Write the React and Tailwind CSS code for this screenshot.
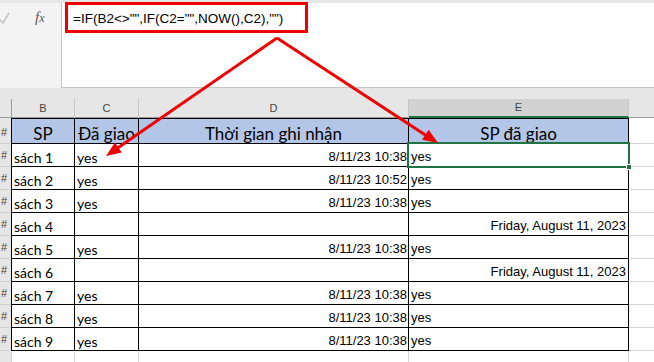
import React from "react";

// Sheet data: B, C, D, E
const rows = [
  ["sách 1", "yes", "8/11/23 10:38", "yes"],
  ["sách 2", "yes", "8/11/23 10:52", "yes"],
  ["sách 3", "yes", "8/11/23 10:38", "yes"],
  ["sách 4", "", "", "Friday, August 11, 2023"],
  ["sách 5", "yes", "8/11/23 10:38", "yes"],
  ["sách 6", "", "", "Friday, August 11, 2023"],
  ["sách 7", "yes", "8/11/23 10:38", "yes"],
  ["sách 8", "yes", "8/11/23 10:38", "yes"],
  ["sách 9", "yes", "8/11/23 10:38", "yes"],
];

const calibri = "font-['Lato','Noto_Sans',sans-serif]";
const arial = "font-['Liberation_Sans',Arial,sans-serif]";

const arrowHead = (x1, y1, x2, y2, len = 15, half = 6) => {
  const dx = x2 - x1;
  const dy = y2 - y1;
  const d = Math.hypot(dx, dy);
  const ux = dx / d;
  const uy = dy / d;
  const bx = x2 - ux * len;
  const by = y2 - uy * len;
  return `${x2},${y2} ${bx - uy * half},${by + ux * half} ${bx + uy * half},${by - ux * half}`;
};

function Arrows() {
  const apex = [277, 38];
  const left = [106, 156];
  const right = [438, 143];
  return (
    <svg className="absolute left-0 top-0 pointer-events-none" width="654" height="362">
      <line x1={apex[0]} y1={apex[1]} x2={left[0] + 8} y2={left[1] - 5.5} stroke="#ee0000" strokeWidth="3" />
      <polygon points={arrowHead(apex[0], apex[1], left[0], left[1])} fill="#ee0000" />
      <line x1={apex[0]} y1={apex[1]} x2={right[0] - 8} y2={right[1] - 5} stroke="#ee0000" strokeWidth="3" />
      <polygon points={arrowHead(apex[0], apex[1], right[0], right[1])} fill="#ee0000" />
    </svg>
  );
}

function FormulaBar() {
  return (
    <div className="flex h-[88px] bg-[#e6e6e6] pt-[3px]">
      <div className="w-[62px] h-full bg-[#f3f3f3] flex items-start pt-[6px] border-r border-[#c6c6c6]">
        <svg width="12" height="14" viewBox="0 0 12 14" className="mt-[2px] -ml-[2px]">
          <polyline points="1,8 5,12 11,2" fill="none" stroke="#c4c4c4" strokeWidth="1.6" />
        </svg>
        <span className="ml-[25px] font-['Liberation_Serif',serif] italic text-[15px] leading-[16px] text-[#5a5a5a]">
          f<span className="text-[12px]">x</span>
        </span>
      </div>
      <div className="flex-1 h-full bg-white border-b border-[#c6c6c6] pl-[3px]">
        <div className={`w-[243px] h-[31px] -mt-[1px] border-[3px] border-[#ee0000] pl-[5px] pt-[6px] ${arial} text-[13.5px] leading-[16px] text-black whitespace-nowrap`}>
          =IF(B2&lt;&gt;"",IF(C2="",NOW(),C2),"")
        </div>
      </div>
    </div>
  );
}

function ColumnHeaders() {
  const hdr = `${arial} text-[11px] leading-[11px] text-[#444] flex items-end justify-center pb-[3px] border-r border-[#c6c6c6]`;
  return (
    <div className="flex h-[19px]">
      <div className="w-[12px] h-full bg-[#e6e6e6] border-r border-b border-[#9b9b9b]" />
      <div className={`w-[63px] h-full bg-[#e6e6e6] border-b border-b-[#9b9b9b] ${hdr}`}>B</div>
      <div className={`w-[64px] h-full bg-[#e6e6e6] border-b border-b-[#9b9b9b] ${hdr}`}>C</div>
      <div className={`w-[270px] h-full bg-[#e6e6e6] border-b border-b-[#9b9b9b] ${hdr}`}>D</div>
      <div className={`w-[220px] h-full bg-[#d2d2d2] border-b-2 border-b-[#217346] ${hdr}`}>E</div>
      <div className="flex-1 h-full bg-[#e6e6e6] border-b border-[#9b9b9b]" />
    </div>
  );
}

function RowHead({ label = "#", h }) {
  return (
    <div className={`w-[11px] ${h} bg-[#e6e6e6] border-b border-[#d0d0d0] ${arial} text-[11px] leading-[11px] text-[#444] flex items-end pb-[5px] pl-[1px] overflow-hidden`}>
      {label}
    </div>
  );
}

export default function App() {
  return (
    <div className="relative w-[654px] h-[362px] overflow-hidden bg-white">
      <FormulaBar />
      <div className="h-[11px] bg-[#e6e6e6]" />
      <ColumnHeaders />

      {/* table header */}
      <div className="flex h-[26px]">
        <RowHead h="h-[26px]" />
        <div className={`w-[64px] bg-[#b4c6e7] border border-black flex items-end justify-center pb-[1px] ${calibri} text-[17px] leading-[17px]`}>SP</div>
        <div className={`w-[64px] bg-[#b4c6e7] border-y border-r border-black flex items-end justify-center pb-[1px] ${calibri} text-[17px] leading-[17px] whitespace-nowrap`}>Đã giao</div>
        <div className={`w-[270px] bg-[#b4c6e7] border-y border-r border-black flex items-end justify-center pb-[1px] ${calibri} text-[17px] leading-[17px]`}>Thời gian ghi nhận</div>
        <div className={`w-[220px] bg-[#b4c6e7] border-y border-r border-black flex items-end justify-center pb-[1px] ${calibri} text-[17px] leading-[17px]`}>SP đã giao</div>
        <div className="flex-1 border-b border-[#d4d4d4]" />
      </div>

      {rows.map(([b, c, d, e], i) => (
        <div key={i} className="flex h-[23px]">
          <RowHead h="h-[23px]" />
          <div className={`w-[64px] border-x border-b border-black flex items-end pb-[1px] pl-[2px] ${calibri} text-[14px] leading-[15px]`}>{b}</div>
          <div className={`w-[64px] border-r border-b border-black flex items-end pb-[1px] pl-[2px] ${calibri} text-[14px] leading-[15px]`}>{c}</div>
          <div className={`w-[270px] border-r border-b border-black flex items-end justify-end pb-[3px] pr-[1px] ${arial} text-[13px] leading-[13px]`}>{d}</div>
          <div className={`w-[220px] border-r border-b border-black flex items-end pb-[3px] px-[2px] ${arial} text-[13px] leading-[13px] whitespace-nowrap ${e === "yes" ? "justify-start" : "justify-end"}`}>{e}</div>
          <div className="flex-1 border-b border-[#d4d4d4]" />
        </div>
      ))}

      <div className="flex h-[12px]">
        <div className="w-[11px] h-full bg-[#e6e6e6]" />
        <div className="w-[64px] h-full border-x border-[#d4d4d4]" />
        <div className="w-[64px] h-full border-r border-[#d4d4d4]" />
        <div className="w-[270px] h-full border-r border-[#d4d4d4]" />
        <div className="w-[220px] h-full border-r border-[#d4d4d4]" />
      </div>

      {/* active cell E2 */}
      <div className="absolute left-[407px] top-[142px] w-[223px] h-[26px] border-2 border-[#217346] pointer-events-none" />
      <div className="absolute left-[626px] top-[164px] w-[6px] h-[6px] bg-[#217346] border border-white" />

      <Arrows />
    </div>
  );
}
